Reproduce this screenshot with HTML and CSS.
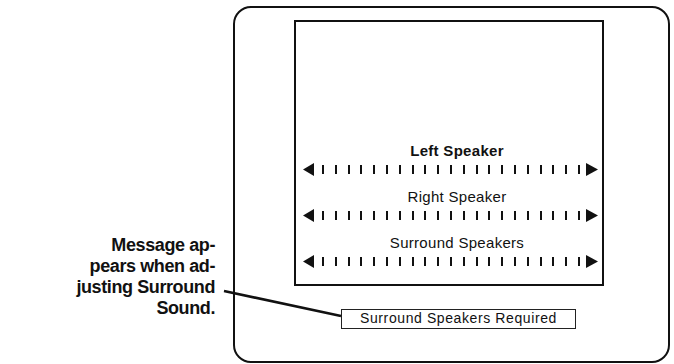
FILE: index.html
```html
<!DOCTYPE html>
<html lang="en">
<head>
  <meta charset="UTF-8" />
  <title>Speaker Balance</title>
  <link rel="stylesheet" href="styles.css">
</head>
<body>
  <div class="page">
    <!-- Callout caption on the left -->
    <p class="caption">Message ap-<br>pears when ad-<br>justing Surround<br>Sound.</p>

    <!-- TV frame with the on-screen menu -->
    <div class="frame">
      <div class="screen">
        <div class="group">
          <div class="label bold">Left Speaker</div>
          <div class="slider" data-ticks="21"></div>
        </div>
        <div class="group">
          <div class="label">Right Speaker</div>
          <div class="slider" data-ticks="21"></div>
        </div>
        <div class="group">
          <div class="label">Surround Speakers</div>
          <div class="slider" data-ticks="21"></div>
        </div>
      </div>
      <div class="message">Surround Speakers Required</div>
    </div>

    <!-- Leader line from caption to message -->
    <svg class="leader" width="674" height="364" viewBox="0 0 674 364">
      <line x1="224" y1="291" x2="341" y2="316" stroke="#111" stroke-width="2.6" />
    </svg>
  </div>

<script>
(function(){
  const left = '<svg class="arrow" width="11" height="13" viewBox="0 0 11 13"><path d="M0 6.5 L11 0 L11 13 Z" fill="#111"/></svg>';
  const right = '<svg class="arrow" width="12" height="13" viewBox="0 0 12 13"><path d="M12 6.5 L0 0 L0 13 Z" fill="#111"/></svg>';

  document.querySelectorAll('.slider').forEach(function(slider){
    const count = parseInt(slider.dataset.ticks, 10);
    let ticks = '';
    for (let i = 0; i < count; i++) {
      ticks += '<span class="tick"></span>';
    }
    slider.innerHTML = left + '<div class="ticks">' + ticks + '</div>' + right;
  });
})();
</script>
</body>
</html>
```

FILE: styles.css
```css
/* Reset and base */
* {
  box-sizing: border-box;
}
html, body {
  margin: 0;
  padding: 0;
  background: #fff;
  color: #111;
  font-family: 'Liberation Sans', Arial, sans-serif;
}

.page {
  position: relative;
  width: 674px;
  height: 364px;
  display: flex;
  align-items: flex-start;
  padding-top: 6px;
  overflow: hidden;
}

/* Left caption */
.caption {
  width: 215px;
  margin: 229px 18px 0 0;
  text-align: right;
  font-size: 18px;
  font-weight: 700;
  line-height: 21px;
  letter-spacing: -0.4px;
}

/* Rounded TV frame */
.frame {
  width: 437px;
  height: 357px;
  border: 2px solid #111;
  border-radius: 18px;
  padding: 12px 0 0 59px;
}

/* Inner screen rectangle */
.screen {
  width: 310px;
  height: 266px;
  border: 2px solid #111;
  display: flex;
  flex-direction: column;
  justify-content: flex-end;
  padding-bottom: 16px;
}

.group + .group {
  margin-top: 12px;
}

.label {
  text-align: center;
  padding-left: 16px;
  font-size: 15px;
  line-height: 18px;
  letter-spacing: 0.3px;
}
.label.bold {
  font-weight: 700;
  letter-spacing: 0.3px;
}

/* Slider row */
.slider {
  display: flex;
  align-items: center;
  height: 14px;
  margin-top: 2px;
  padding: 0 4px 0 7px;
}
.arrow {
  display: block;
  flex: none;
}
.ticks {
  flex: 1;
  display: flex;
  justify-content: space-between;
  align-items: center;
  padding: 0 6px 0 8px;
}
.tick {
  width: 2px;
  height: 9px;
  background: #111;
}

/* Warning message box */
.message {
  width: 235px;
  height: 20px;
  margin: 23px 0 0 47px;
  border: 1.5px solid #222;
  text-align: center;
  font-size: 14px;
  line-height: 17px;
  letter-spacing: 0.6px;
}

/* Leader line overlay */
.leader {
  position: absolute;
  top: 0;
  left: 0;
  pointer-events: none;
}
```
